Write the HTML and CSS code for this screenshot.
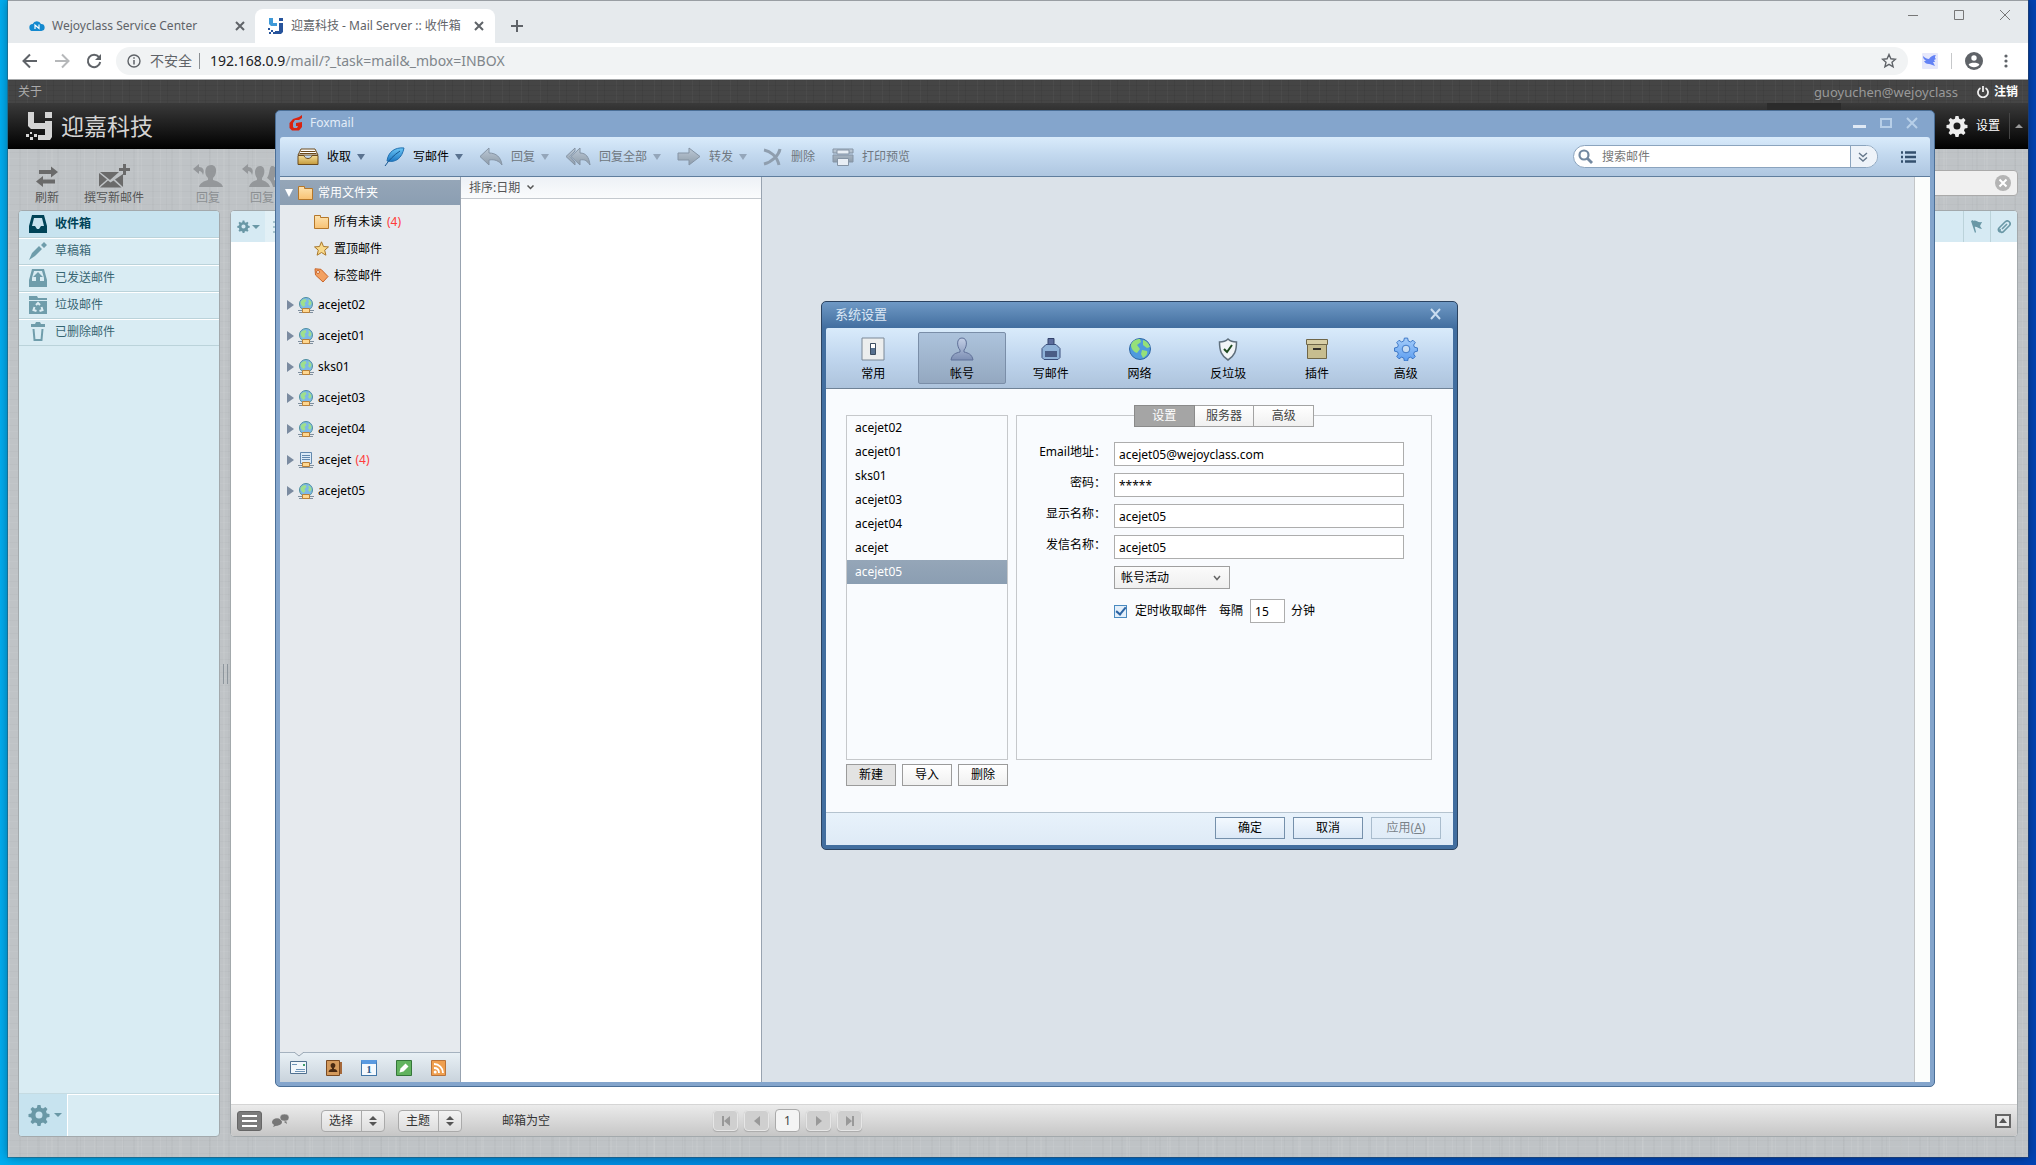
FILE: index.html
```html
<!DOCTYPE html>
<html lang="zh-CN">
  <head>
    <title>迎嘉科技 - Mail Server :: 收件箱</title>
    <meta charset="utf-8" />
    <link rel="stylesheet" href="styles.css">
  </head>
  <body>
    <svg class="sprite" aria-hidden="true">
      <defs>
        <linearGradient id="g-gold" x1="0" y1="0" x2="0" y2="1"><stop offset="0" stop-color="#f3dc97"/><stop offset="1" stop-color="#c49a3c"/></linearGradient>
        <linearGradient id="g-folder" x1="0" y1="0" x2="0" y2="1"><stop offset="0" stop-color="#fde3b0"/><stop offset="1" stop-color="#f8c172"/></linearGradient>
        <linearGradient id="g-grey" x1="0" y1="0" x2="0" y2="1"><stop offset="0" stop-color="#bcc9d6"/><stop offset="1" stop-color="#8e9caa"/></linearGradient>
        <linearGradient id="g-blue" x1="0" y1="0" x2="0" y2="1"><stop offset="0" stop-color="#6cc6f5"/><stop offset="1" stop-color="#1d78c4"/></linearGradient>
        <linearGradient id="g-slate" x1="0" y1="0" x2="0" y2="1"><stop offset="0" stop-color="#c3cfe6"/><stop offset="1" stop-color="#7d8fb4"/></linearGradient>
        <linearGradient id="g-gear" x1="0" y1="0" x2="0" y2="1"><stop offset="0" stop-color="#a5cdfa"/><stop offset="1" stop-color="#5c9df0"/></linearGradient>
        <path id="gear-shape" fill-rule="evenodd" d="M9.500 1h3l.6 2.700 2 .8 2.300-1.500 2.100 2.100-1.500 2.300.8 2 2.700.6v3l-2.700.6-.8 2 1.500 2.300-2.100 2.100-2.300-1.500-2 .8-.6 2.700h-3l-.6-2.700-2-.8-2.300 1.500-2.100-2.100 1.500-2.300-.8-2-2.700-.6v-3l2.700-.6.8-2-1.500-2.300 2.100-2.100 2.300 1.500 2-.8zM11 7.500a3.500 3.500 0 1 0 0 7 3.500 3.500 0 0 0 0-7z"/>
        <g id="net-globe">
          <circle cx="8" cy="7" r="6.500" fill="#7db8e8" stroke="#4d8f9e"/>
          <path d="M2.500 5c1-2 3-3 5-3l1 2-2 2 1 2-2 2C4 9 2.500 7 2.500 5zM10 2.500c2 .5 3.500 2 3.500 4L12 9l-2-2 1-2z" fill="#9fe08c"/>
          <path d="M0 13.500h16M1 15.500h14" stroke="#7f8f9e"/>
          <path d="M4.500 11.500h7v4h-7z" fill="#ffd78f" stroke="#b9813a"/>
        </g>
      </defs>
    </svg>

    <div class="desktop">
      <div class="browser">
        <div class="tabs">
          <div class="tab">
            <svg width="16" height="16" viewBox="0 0 16 16"><path d="M4 13a3.500 3.500 0 0 1-.3-7A4.500 4.500 0 0 1 12 6a3.500 3.500 0 0 1 .3 7z" fill="#1389cf"/><path d="M6 11V7l4 3.500V6.500" fill="none" stroke="#fff" stroke-width="1.200"/></svg>
            <span class="tab-title">Wejoyclass Service Center</span>
            <button class="tab-close" aria-label="关闭"><svg width="10" height="10" viewBox="0 0 10 10"><path d="M1 1l8 8M9 1L1 9"/></svg></button>
          </div>
          <div class="tab active">
            <svg width="16" height="16" viewBox="0 0 16 16"><path d="M1 0h4v5h4v3H3L1 6z" fill="#3f9ad8"/><path d="M11 0h4v3h-4zM11 5h4v9l-2 2H7v-3h4z" fill="#27549c"/><path d="M0 10h2v2H0zM3 12h2v2H3zM1 14h2v2H1zM5 14h2v2H5z" fill="#27549c"/></svg>
            <span class="tab-title">迎嘉科技 - Mail Server :: 收件箱</span>
            <button class="tab-close" aria-label="关闭"><svg width="10" height="10" viewBox="0 0 10 10"><path d="M1 1l8 8M9 1L1 9"/></svg></button>
          </div>
          <button class="tab-new" aria-label="新标签页"><svg width="12" height="12" viewBox="0 0 12 12"><path d="M6 0v12M0 6h12"/></svg></button>
          <div class="browser-controls">
            <button aria-label="最小化"><svg width="10" height="10" viewBox="0 0 10 10"><path d="M0 5.500h10"/></svg></button>
            <button aria-label="最大化"><svg width="10" height="10" viewBox="0 0 10 10"><path d="M.5.5h9v9h-9z"/></svg></button>
            <button aria-label="关闭窗口"><svg width="10" height="10" viewBox="0 0 10 10"><path d="M0 0l10 10M10 0L0 10"/></svg></button>
          </div>
        </div>

        <div class="navbar">
          <button class="nav" aria-label="后退"><svg width="16" height="16" viewBox="0 0 16 16"><path d="M15 8H2M8 1.500L1.500 8 8 14.500"/></svg></button>
          <button class="nav dim" aria-label="前进"><svg width="16" height="16" viewBox="0 0 16 16"><path d="M1 8h13M8 1.500L14.500 8 8 14.500"/></svg></button>
          <button class="nav" aria-label="刷新页面"><svg width="16" height="16" viewBox="0 0 16 16"><path d="M13 4.200A6.200 6.200 0 1 0 14.200 9"/><path d="M15 1v6H9z" fill="#5f6368" stroke="none"/></svg></button>
          <div class="omnibox">
            <svg width="14" height="14" viewBox="0 0 14 14"><circle cx="7" cy="7" r="6" fill="none" stroke="#5f6368" stroke-width="1.400"/><path d="M7 6v4.500M7 3.300v1.500" stroke="#5f6368" stroke-width="1.500"/></svg>
            <span class="insecure">不安全</span>
            <span class="url"><b>192.168.0.9</b>/mail/?_task=mail&amp;_mbox=INBOX</span>
            <svg class="star" width="16" height="16" viewBox="0 0 16 16"><path d="M8 1.500l1.900 4.300 4.600.4-3.500 3.100 1.100 4.600L8 11.400l-4.100 2.500L5 9.300 1.500 6.200l4.600-.4z" fill="none" stroke="#5f6368" stroke-width="1.400"/></svg>
          </div>
          <svg class="bird" width="16" height="16" viewBox="0 0 16 16"><rect width="16" height="16" rx="1" fill="#e6e8fb"/><path d="M1 3c2 2 4 3 6 3 1-2 4-4 7-4-1 1-1 2-1 3l1 1-2 1 1 2h-2l2 4c-3-1-4-2-6-2-3 0-4-1-5-3 1 0 1 0 2-.5C2 7 1 5 1 3z" fill="#6382f5"/></svg>
          <span class="nav-rule"></span>
          <svg class="avatar" width="18" height="18" viewBox="0 0 18 18"><circle cx="9" cy="9" r="9" fill="#5f6368"/><circle cx="9" cy="6" r="2.700" fill="#fff"/><path d="M3.600 12.500c1-2.500 9.800-2.500 10.800 0-2 3.500-8.800 3.500-10.800 0z" fill="#fff"/></svg>
          <svg width="4" height="14" viewBox="0 0 4 14" fill="#5f6368"><circle cx="2" cy="2" r="1.600"/><circle cx="2" cy="7" r="1.600"/><circle cx="2" cy="12" r="1.600"/></svg>
        </div>

        <div class="webmail">
          <div class="topline">
            <a href="#about">关于</a>
            <span class="username">guoyuchen@wejoyclass</span>
            <a class="logout" href="#logout"><svg width="12" height="12" viewBox="0 0 12 12"><path d="M3.500 2a5 5 0 1 0 5 0M6 0v6" fill="none" stroke="#eee" stroke-width="1.800"/></svg>注销</a>
          </div>
          <div class="masthead">
            <svg width="27" height="28" viewBox="0 0 27 28" fill="#d4d4d4"><path d="M2 0h6v11h11V9h7v16l-2 3H12v-5h7v-6H5l-3-3zM19 0h7v6h-7z"/><path d="M0 22h3v3H0zM4 25h3v3H4zM8 22h3v3H8zM4 20h2v2H4z"/></svg>
            <span class="brand">迎嘉科技</span>
            <span class="task-tab"></span>
            <a class="settings" href="#settings"><svg width="22" height="22" viewBox="0 0 22 22" fill="#eee"><use href="#gear-shape"/></svg>设置</a>
            <button class="task-more" aria-label="更多"><svg width="8" height="4" viewBox="0 0 8 4"><path d="M4 0l4 4H0z" fill="#999"/></svg></button>
          </div>
          <div class="mail-toolbar">
            <button class="tool refresh"><svg width="24" height="24" viewBox="0 0 24 24"><path d="M4 6h12V2.500L23 8l-7 5.500V10H4zM20 15.500H8V12l-7 5.500L8 23v-3.500h12z"/></svg>刷新</button>
            <button class="tool compose"><svg width="31" height="24" viewBox="0 0 31 24"><path d="M0 9l8 6.500L0 22.500zM1 8h19l-9 8zM24 10v13l-8-7.500zM1 23.500l8-7 2.500 2 3-2 8 7z"/><path d="M24 0h3v4h4v3h-4v4h-3V7h-4V4h4z"/></svg>撰写新邮件</button>
            <button class="tool reply" disabled><svg width="30" height="24" viewBox="0 0 30 24"><path d="M0 5l6-5v3c4 0 6 3 4 8-1-3-2-4-4-4v3z"/><path d="M18 1c7 0 6 10 2 13v2c4 1 9 3 10 7H6c1-4 5-6 9-7v-2C11 11 11 1 18 1z"/></svg>回复</button>
            <button class="tool reply-all" disabled><svg width="40" height="24" viewBox="0 0 40 24"><path d="M0 5l6-5v3c4 0 6 3 4 8-1-3-2-4-4-4v3z"/><path d="M18 2c6 0 5 9 2 12v2c3 1 7 3 8 7H7c1-4 4-6 8-7v-2c-3-3-3-12 3-12zM30 2c6 0 5 9 2 12v2c3 1 7 3 8 7h-9c-1-5-4-8-6-9 3-4 2-12 5-12z"/></svg>回复</button>
            <div class="quicksearch"><input type="text" aria-label="搜索"><button aria-label="清除"><svg width="16" height="16" viewBox="0 0 16 16"><circle cx="8" cy="8" r="8" fill="#b4b4b4"/><path d="M4.500 4.500l7 7M11.500 4.500l-7 7" stroke="#fff" stroke-width="2"/></svg></button></div>
          </div>
          <div class="panes">
            <div class="folders">
              <ul>
                <li class="selected"><a href="#inbox"><svg width="20" height="18" viewBox="0 0 20 18"><path fill-rule="evenodd" d="M4 0h12l3 11v7H1v-7zM6 3L4 11h3l2 3h2l2-3h3l-2-8z"/></svg>收件箱</a></li>
                <li><a href="#drafts"><svg width="20" height="18" viewBox="0 0 20 18"><path d="M1 18l3-7 7-7 3 3-7 7zM13 3l3-3 3 3-3 3z"/></svg>草稿箱</a></li>
                <li><a href="#sent"><svg width="20" height="18" viewBox="0 0 20 18"><path fill-rule="evenodd" d="M4 0h12l3 11v7H1v-7zM6 2L4 9v3h12V9l-2-7z"/><path d="M10 3l5 5h-3v5H8V8H5z"/></svg>已发送邮件</a></li>
                <li><a href="#junk"><svg width="20" height="18" viewBox="0 0 20 18"><path d="M1 0h8l1 2h9v2H1z"/><path d="M1 5h18v13H1z"/><path d="M8 9l2-2 2 2M13.500 11l1 3-3 1M8.500 15l-3-1 1-3" fill="none" stroke="#dcedf3" stroke-width="2"/></svg>垃圾邮件</a></li>
                <li><a href="#trash"><svg width="20" height="20" viewBox="0 0 20 20"><path d="M3 2h4l1-2h4l1 2h4v3H3z"/><path d="M5.500 7l1 11h7l1-11" fill="none" stroke="#6f9dab" stroke-width="2"/></svg>已删除邮件</a></li>
              </ul>
              <div class="folders-footer">
                <button aria-label="文件夹操作"><svg width="22" height="22" viewBox="0 0 22 22" fill="#6a98a6"><use href="#gear-shape"/></svg><i class="caret"></i></button>
              </div>
            </div>
            <div class="splitter"></div>
            <div class="messages">
              <div class="list-head">
                <button class="list-options" aria-label="列表选项"><svg width="13" height="13" viewBox="0 0 22 22" fill="#6a98a6"><use href="#gear-shape"/></svg><i class="caret"></i></button>
                <span class="subject"><svg width="12" height="12" viewBox="0 0 12 12"><path d="M1 1h10M1 6h10M1 11h10" stroke="#6a98a6"/></svg></span>
                <span class="flag"><svg width="12" height="13" viewBox="0 0 12 13" fill="#6a98a6"><path d="M0 1l2-1 3 12-1 1zM2 1c3-2 4 2 9 1L9 6l2 3C7 9 6 6 3 7z"/></svg></span>
                <span class="attach"><svg width="14" height="14" viewBox="0 0 14 14" fill="none" stroke="#6a98a6" stroke-width="1.600"><path d="M5 9l5-5M3 12c-2-1-2-3-1-4l6-6c3-3 7 1 4 4l-6 6c-2 1-4-1-2.500-3"/></svg></span>
              </div>
              <div class="list-body"></div>
              <div class="list-foot">
                <button class="mode on" aria-label="列表"><svg width="15" height="12" viewBox="0 0 15 12"><path d="M0 1h15M0 6h15M0 11h15" stroke="#fff" stroke-width="2"/></svg></button>
                <button class="mode" aria-label="会话"><svg width="17" height="13" viewBox="0 0 17 13" fill="#777"><ellipse cx="5" cy="8" rx="5" ry="3.700"/><path d="M1 13l2-4 3 2zM15 10l-1-4-2 2z"/><ellipse cx="12.500" cy="3.600" rx="4.500" ry="3.500" stroke="#d8d8d8" stroke-width=".6"/></svg></button>
                <button class="picker">选择<span><i class="up"></i><i class="down"></i></span></button>
                <button class="picker">主题<span><i class="up"></i><i class="down"></i></span></button>
                <span class="count">邮箱为空</span>
                <div class="pager">
                  <button aria-label="首页" disabled><svg width="10" height="10" viewBox="0 0 10 10"><path d="M1 0h2v10H1zM9 0v10L3 5z"/></svg></button>
                  <button aria-label="上一页" disabled><svg width="10" height="10" viewBox="0 0 10 10"><path d="M8 0v10L2 5z"/></svg></button>
                  <input type="text" value="1" aria-label="页码">
                  <button aria-label="下一页" disabled><svg width="10" height="10" viewBox="0 0 10 10"><path d="M2 0v10l6-5z"/></svg></button>
                  <button aria-label="末页" disabled><svg width="10" height="10" viewBox="0 0 10 10"><path d="M7 0h2v10H7zM1 0v10l6-5z"/></svg></button>
                </div>
                <button class="preview-toggle" aria-label="预览"><svg width="16" height="14" viewBox="0 0 16 14"><path d="M1 1h14v12H1z" fill="#e8e8e8" stroke="#666" stroke-width="2"/><path d="M8 4l4 5H4z" fill="#555"/></svg></button>
              </div>
            </div>
          </div>
        </div>
      </div>

      <div class="foxmail">
        <div class="fox-title">
          <svg width="14" height="16" viewBox="0 0 14 16"><path d="M4 4l6-2 3-2v3L10 5H6L4 8v4l1 1h3l1-2H7V8l6-1v5l-3 3.500H3L.5 13V8z" fill="#d9230f"/></svg>
          <span>Foxmail</span>
          <div class="fox-controls">
            <button aria-label="最小化"><svg width="13" height="10" viewBox="0 0 13 10"><path d="M0 7h13v3H0z" fill="#dfe9f5"/></svg></button>
            <button aria-label="最大化"><svg width="12" height="10" viewBox="0 0 12 10"><path d="M1 1h10v8H1z" fill="none" stroke="#b7cfe8" stroke-width="2"/></svg></button>
            <button aria-label="关闭"><svg width="12" height="12" viewBox="0 0 12 12"><path d="M1 1l10 10M11 1L1 11" stroke="#b7cfe8" stroke-width="2"/></svg></button>
          </div>
        </div>
        <div class="fox-toolbar">
          <button><svg width="22" height="18" viewBox="0 0 22 18"><path d="M4 1h14l3 6H1z" fill="#fff" stroke="#6b4a1c"/><path d="M3.500 3.500h15M2.500 5.500h17" stroke="#6b4a1c"/><path d="M1 7.500h6c1 4 7 4 8 0h6v9H1z" fill="url(#g-gold)" stroke="#6b4a1c"/></svg>收取<i class="caret"></i></button>
          <button><svg width="24" height="20" viewBox="0 0 24 20"><path d="M23 1C14 0 7 5 6 14c9 2 15-3 17-13z" fill="url(#g-blue)" stroke="#2471b0"/><path d="M4 19C8 13 13 8 19 4" fill="none" stroke="#16568f"/></svg>写邮件<i class="caret"></i></button>
          <button disabled><svg width="24" height="20" viewBox="0 0 24 20"><path d="M10 1v5c7 0 12 4 13 12-3-4-7-6-13-5v5L1 9.500z" fill="url(#g-grey)" stroke="#8594a5"/></svg>回复<i class="caret"></i></button>
          <button disabled><svg width="26" height="20" viewBox="0 0 26 20"><path d="M10 1v3L5 9.500 10 15v3L1 9.500z" fill="url(#g-grey)" stroke="#8594a5"/><path d="M15 1v5c6 0 9 4 10 12-3-4-5-6-10-5v5L6 9.500z" fill="url(#g-grey)" stroke="#8594a5"/></svg>回复全部<i class="caret"></i></button>
          <button disabled><svg width="24" height="20" viewBox="0 0 24 20"><path d="M1 6h11V1l11 8.500L12 18v-5H1z" fill="url(#g-grey)" stroke="#8594a5"/></svg>转发<i class="caret"></i></button>
          <button disabled><svg width="20" height="18" viewBox="0 0 20 18"><path d="M1 2c6 1 13 6 15 15M17 1c-1 6-8 13-16 15" fill="none" stroke="#8f9eae" stroke-width="3"/></svg>删除</button>
          <button disabled><svg width="22" height="18" viewBox="0 0 22 18"><path d="M1 1h20v4H1zM1 7h20v7H1z" fill="url(#g-grey)" stroke="#8594a5"/><path d="M5 2h12v4H5zM5.500 10.500h11v7h-11z" fill="#e8eef5" stroke="#8594a5"/></svg>打印预览</button>
          <div class="fox-search">
            <svg width="15" height="15" viewBox="0 0 15 15"><circle cx="6" cy="6" r="4.500" fill="none" stroke="#7288a0" stroke-width="2.200"/><path d="M9.500 9.500L14 14" stroke="#7288a0" stroke-width="2.800"/></svg>
            <input type="text" placeholder="搜索邮件" aria-label="搜索邮件">
            <button aria-label="高级搜索"><svg width="10" height="10" viewBox="0 0 10 10"><path d="M1 1l4 3.500L9 1M1 5.500L5 9l4-3.500" fill="none" stroke="#66788c" stroke-width="1.400"/></svg></button>
          </div>
          <button class="fox-menu" aria-label="菜单"><svg width="15" height="12" viewBox="0 0 15 12"><path d="M0 1.500h2M4 1.500h11M0 6h2M4 6h11M0 10.500h2M4 10.500h11" stroke="#34506e" stroke-width="2.600"/></svg></button>
        </div>
        <div class="fox-body">
          <div class="fox-side">
            <div class="group"><i class="open"></i><svg width="15" height="14" viewBox="0 0 15 14"><path d="M.5.5h6v2h8v11H.5z" fill="url(#g-folder)" stroke="#b5772a"/></svg>常用文件夹</div>
            <ul class="common">
              <li><svg width="15" height="14" viewBox="0 0 15 14"><path d="M.5.5h6v2h8v11H.5z" fill="url(#g-folder)" stroke="#b5772a"/></svg>所有未读 <em>(4)</em></li>
              <li><svg width="15" height="15" viewBox="0 0 15 15"><path d="M7.500.8l2 4.700 5 .4-3.800 3.300 1.200 5-4.400-2.700-4.400 2.700 1.200-5L.5 5.900l5-.4z" fill="#f8d98a" stroke="#a8772c"/></svg>置顶邮件</li>
              <li><svg width="15" height="15" viewBox="0 0 15 15"><path d="M1 .8l6 .5L14 8.500 9 14 1.500 7z" fill="#f3a161" stroke="#c9662b"/><circle cx="4" cy="4" r="1.500" fill="#fff" stroke="#c9662b"/></svg>标签邮件</li>
            </ul>
            <ul class="accounts">
              <li><i class="closed"></i><svg width="16" height="16" viewBox="0 0 16 16"><use href="#net-globe"/></svg>acejet02</li>
              <li><i class="closed"></i><svg width="16" height="16" viewBox="0 0 16 16"><use href="#net-globe"/></svg>acejet01</li>
              <li><i class="closed"></i><svg width="16" height="16" viewBox="0 0 16 16"><use href="#net-globe"/></svg>sks01</li>
              <li><i class="closed"></i><svg width="16" height="16" viewBox="0 0 16 16"><use href="#net-globe"/></svg>acejet03</li>
              <li><i class="closed"></i><svg width="16" height="16" viewBox="0 0 16 16"><use href="#net-globe"/></svg>acejet04</li>
              <li><i class="closed"></i><svg width="16" height="16" viewBox="0 0 16 16"><path d="M2.500.5h11v11h-11z" fill="#dcebf8" stroke="#6288ad"/><path d="M4 3.500h8M4 5.500h8M4 7.500h8" stroke="#6288ad"/><path d="M0 13.500h16M1 15.500h14" stroke="#7f8f9e"/><path d="M4.500 10.500h7v4h-7z" fill="#ffd78f" stroke="#b9813a"/></svg>acejet <em>(4)</em></li>
              <li><i class="closed"></i><svg width="16" height="16" viewBox="0 0 16 16"><use href="#net-globe"/></svg>acejet05</li>
            </ul>
            <div class="modules">
              <svg class="notch" width="10" height="5" viewBox="0 0 10 5"><path d="M0 0l5 4 5-4" fill="#e6eaee" stroke="#98a6b3"/></svg>
              <button aria-label="邮件"><svg width="17" height="16" viewBox="0 0 17 16"><path d="M.5 1.500h16v12H.5z" fill="#f2f7fb" stroke="#50708f"/><path d="M2 4.500h5M6 9.500h9M5 11.500h10" stroke="#6f95b8"/><path d="M13 4h2v2h-2z" fill="#3f9f6a"/></svg></button>
              <button aria-label="联系人"><svg width="16" height="16" viewBox="0 0 16 16"><path d="M.5.500h13v15H.5z" fill="#d49a5c" stroke="#7a4a22"/><path d="M14 2h2v12h-2z" fill="#a5683a"/><path d="M7 3c3 0 3 4 1 5v1c2 0 3 1 3.500 3h-9C3 10 4 9 6 9V8C4 7 4 3 7 3z" fill="#4a2a12"/></svg></button>
              <button class="calendar" aria-label="日历"><b>1</b></button>
              <button aria-label="便签"><svg width="16" height="16" viewBox="0 0 16 16"><path d="M.5.500h15v15H.5z" fill="#62b35f" stroke="#34763a"/><path d="M3.500 12.500l1-4 5-5 3 3-5 5z" fill="#fff"/></svg></button>
              <button aria-label="订阅"><svg width="15" height="16" viewBox="0 0 15 16"><path d="M.5.500h14v15H.5z" fill="#ef9f4f" stroke="#b9733a"/><path d="M3 4c5 0 9 4 9 9M3 8c3 0 5 2 5 5" fill="none" stroke="#fff" stroke-width="1.800"/><circle cx="4.200" cy="12" r="1.500" fill="#fff"/></svg></button>
            </div>
          </div>
          <div class="fox-list">
            <div class="sort">排序:日期 <svg width="7" height="5" viewBox="0 0 7 5"><path d="M.5.500l3 3 3-3" fill="none" stroke="#555" stroke-width="1.500"/></svg></div>
          </div>
          <div class="fox-preview"></div>
          <div class="fox-strip"></div>
        </div>
      </div>

      <form class="dialog">
        <div class="dialog-title">系统设置<button type="button" aria-label="关闭"><svg width="11" height="12" viewBox="0 0 11 12"><path d="M1 1l9 10M10 1L1 11" stroke="#c9dcf0" stroke-width="2"/></svg></button></div>
        <div class="sections">
          <button type="button"><svg width="24" height="24" viewBox="0 0 24 24"><path d="M1 1h22v22H1z" fill="#eceeee" stroke="#7b8896"/><path d="M9.500 6.500h5v11h-5z" fill="#56708f" stroke="#3b4c60"/><path d="M10 7h4v4h-4z" fill="#fff"/></svg>常用</button>
          <button type="button" class="current"><svg width="24" height="24" viewBox="0 0 24 24"><path d="M12 1c6 0 5 9 2 12v2c4 1 8 2 9 8H1c1-6 5-7 9-8v-2C7 10 6 1 12 1z" fill="url(#g-slate)" stroke="#5f7098"/></svg>帐号</button>
          <button type="button"><svg width="24" height="24" viewBox="0 0 24 24"><path d="M9 1.500h6v6H9z" fill="#5c6c9c" stroke="#33436b"/><path d="M7 7.500h10l4 4v9l-2 2H5l-2-2v-9z" fill="#8fb2d8" stroke="#3a4f7c"/><path d="M6 14h12v6H6z" fill="#4a5d86"/></svg>写邮件</button>
          <button type="button"><svg width="24" height="24" viewBox="0 0 24 24"><circle cx="12" cy="12" r="10.500" fill="#4e9ade" stroke="#2f68a5"/><path d="M3 8c1-4 5-6 9-6l1 3-4 3 3 4-3 4c-3-1-6-4-6-8zM15 3c4 1 6 4 7 7l-3 1-4-3zM14 13l5 1c1 3-1 5-4 7l-2-4z" fill="#95e079"/></svg>网络</button>
          <button type="button"><svg width="24" height="24" viewBox="0 0 24 24"><path d="M12 2c2 2 5 3 8.500 3 0 9-2 14-8.500 18C5.500 19 3.500 14 3.500 5 7 5 10 4 12 2z" fill="#f2f5f7" stroke="#5f6f7c" stroke-width="1.500"/><path d="M8 12l3 3 5-7" fill="none" stroke="#1f4a1f" stroke-width="2"/></svg>反垃圾</button>
          <button type="button"><svg width="24" height="24" viewBox="0 0 24 24"><path d="M1.500 2.500h21v5h-21z" fill="#d8cfa6" stroke="#6f6648"/><path d="M2.500 7.500h19v14h-19z" fill="#c7bd8f" stroke="#6f6648"/><path d="M8 12h8" stroke="#33302a" stroke-width="2"/></svg>插件</button>
          <button type="button"><svg width="24" height="24" viewBox="0 0 22 22" fill="url(#g-gear)" stroke="#2f6cc0" stroke-width=".8"><use href="#gear-shape"/></svg>高级</button>
        </div>
        <div class="dialog-body">
          <div class="account-list">
            <ul>
              <li>acejet02</li>
              <li>acejet01</li>
              <li>sks01</li>
              <li>acejet03</li>
              <li>acejet04</li>
              <li>acejet</li>
              <li class="selected">acejet05</li>
            </ul>
            <div class="account-actions">
              <button type="button" class="pressed">新建</button>
              <button type="button">导入</button>
              <button type="button">删除</button>
            </div>
          </div>
          <div class="account-form">
            <div class="form-tabs">
              <button type="button" class="current">设置</button>
              <button type="button">服务器</button>
              <button type="button">高级</button>
            </div>
            <div class="fields">
              <label for="email">Email地址：</label>
              <input id="email" type="text" value="acejet05@wejoyclass.com">
              <label for="pass">密码：</label>
              <input id="pass" type="text" value="*****">
              <label for="shown">显示名称：</label>
              <input id="shown" type="text" value="acejet05">
              <label for="sender">发信名称：</label>
              <input id="sender" type="text" value="acejet05">
              <div class="status">
                <select aria-label="帐号状态"><option>帐号活动</option></select>
                <svg width="8" height="6" viewBox="0 0 8 6"><path d="M1 1l3 3.500L7 1" fill="none" stroke="#666" stroke-width="1.500"/></svg>
              </div>
              <div class="timer">
                <input id="auto" type="checkbox" checked>
                <label for="auto">定时收取邮件</label>
                <label for="every">每隔</label>
                <input id="every" type="text" value="15">
                <span>分钟</span>
              </div>
            </div>
          </div>
        </div>
        <div class="dialog-footer">
          <button type="button">确定</button>
          <button type="button">取消</button>
          <button type="button" disabled>应用(<u>A</u>)</button>
        </div>
      </form>
    </div>
  </body>
</html>
```
FILE: styles.css
```css
* {
  box-sizing: border-box;
}
body {
  margin: 0;
  font-family: "Noto Sans", "Noto Sans CJK SC", sans-serif;
  font-size: 12px;
  line-height: 16px;
  color: #000;
}
ul {
  list-style: none;
  margin: 0;
  padding: 0;
}
button, input, select {
  font: inherit;
  color: inherit;
  margin: 0;
}
button {
  border: 0;
  padding: 0;
  background: none;
}
a {
  color: inherit;
  text-decoration: none;
}
svg {
  display: block;
  flex: none;
}
em {
  font-style: normal;
  color: #ff3b3b;
}
.sprite {
  position: absolute;
  width: 0;
  height: 0;
}
.caret {
  border: 4px solid transparent;
  border-top: 4px solid currentColor;
  border-bottom: 0;
}

.desktop {
  position: relative;
  display: flex;
  min-height: 100vh;
  padding: 0 8px 8px;
  background: linear-gradient(90deg, #00adf0, #0078d8 50%, #0043b4 85%);
}

/* browser */
.browser {
  flex: 1;
  display: flex;
  flex-direction: column;
  min-width: 0;
  border-top: 1px solid #999ea3;
  box-shadow: 0 0 0 1px rgba(60, 70, 80, 0.4), 0 0 10px rgba(0, 0, 0, 0.4);
}
.tabs {
  display: flex;
  align-items: flex-end;
  height: 42px;
  background: #e6eaed;
  color: #5f6368;
}
.tab {
  display: flex;
  align-items: center;
  width: 247px;
  height: 34px;
  padding: 0 10px 0 21px;
}
.tab.active {
  width: 240px;
  padding: 0 11px 0 13px;
  border-radius: 8px 8px 0 0;
  background: #fff;
}
.tab-title {
  flex: 1;
  margin-left: 7px;
  white-space: nowrap;
}
.tab-close svg, .tab-new svg, .browser-controls svg {
  fill: none;
  stroke: #5f6368;
  stroke-width: 2;
}
.tab-new {
  padding: 11px 16px;
}
.browser-controls {
  display: flex;
  align-self: flex-start;
  gap: 36px;
  margin-left: auto;
  padding: 9px 18px 0 0;
}
.browser-controls svg {
  stroke: #777;
  stroke-width: 1;
}
.navbar {
  display: flex;
  align-items: center;
  height: 37px;
  padding: 0 20px 0 14px;
  border-bottom: 1px solid #a6a8aa;
  background: #fff;
}
.nav {
  margin-right: 16px;
}
.nav svg {
  fill: none;
  stroke: #5f6368;
  stroke-width: 2;
}
.nav.dim {
  opacity: 0.45;
}
.omnibox {
  flex: 1;
  display: flex;
  align-items: center;
  height: 28px;
  margin-left: -2px;
  padding: 0 11px;
  border-radius: 14px;
  background: #f1f3f4;
  font-size: 14px;
  color: #5f6368;
}
.insecure {
  margin: 0 7px 0 9px;
}
.url {
  flex: 1;
  padding-left: 10px;
  border-left: 1px solid #8b8f93;
  color: #80868b;
}
.url b {
  font-weight: normal;
  color: #202124;
}
.bird {
  margin-left: 14px;
}
.nav-rule {
  width: 1px;
  height: 16px;
  margin: 0 13px;
  background: #c6c8ca;
}
.avatar {
  margin-right: 21px;
}

/* webmail page, linen texture from a few stripe sets that never line up */
.webmail {
  flex: 1;
  display: flex;
  flex-direction: column;
  background:
    repeating-linear-gradient(90deg, rgba(255, 255, 255, 0.07) 0 1px, transparent 1px 11px, rgba(0, 0, 0, 0.02) 11px 13px, transparent 13px 19px),
    repeating-linear-gradient(90deg, rgba(255, 255, 255, 0.06) 0 2px, transparent 2px 29px, rgba(0, 0, 0, 0.02) 29px 30px, transparent 30px 43px),
    repeating-linear-gradient(rgba(255, 255, 255, 0.05) 0 1px, transparent 1px 7px, rgba(0, 0, 0, 0.02) 7px 8px, transparent 8px 13px),
    #bfc3c6;
}
.topline {
  display: flex;
  align-items: center;
  height: 23px;
  padding: 0 10px;
  background:
    repeating-linear-gradient(90deg, rgba(255, 255, 255, 0.03) 0 1px, transparent 1px 7px, rgba(0, 0, 0, 0.06) 7px 8px, transparent 8px 19px),
    repeating-linear-gradient(rgba(0, 0, 0, 0.05) 0 1px, transparent 1px 5px),
    #454545;
  color: #aaa;
}
.username {
  margin-left: auto;
  margin-right: 19px;
  font-size: 13px;
  color: #999;
}
.logout {
  display: flex;
  align-items: center;
  gap: 5px;
  font-weight: bold;
  color: #fff;
}
.masthead {
  display: flex;
  align-items: center;
  height: 46px;
  padding: 0 5px 0 18px;
  background: linear-gradient(#3a3a3a, #000);
  color: #fff;
}
.brand {
  margin-left: 8px;
  font-size: 23px;
  line-height: 28px;
  color: #d4d4d4;
}
.task-tab {
  align-self: flex-start;
  width: 74px;
  height: 7px;
  margin-left: auto;
  margin-right: 105px;
  background: #2b2b2b;
}
.settings {
  display: flex;
  align-items: center;
  gap: 8px;
}
.task-more {
  display: flex;
  align-items: center;
  height: 26px;
  margin-left: 9px;
  padding-left: 5px;
  border-left: 1px solid #444;
}
.mail-toolbar {
  display: flex;
  height: 61px;
  padding: 0 10px 0 12px;
}
.tool {
  display: flex;
  flex-direction: column;
  align-items: center;
  padding-top: 15px;
  width: 54px;
  color: #555;
}
.tool svg {
  margin-bottom: 2px;
  fill: #6a6a6a;
}
.tool.compose {
  width: 80px;
}
.tool:disabled {
  color: #8b8f92;
}
.tool:disabled svg {
  fill: #94979a;
}
.tool.reply {
  margin-left: 27px;
}
.quicksearch {
  display: flex;
  align-items: center;
  width: 240px;
  height: 26px;
  margin: 21px 0 0 auto;
  padding-right: 6px;
  border: 1px solid #aaa;
  border-radius: 4px;
  background: #f0f0f0;
}
.quicksearch input {
  flex: 1;
  min-width: 0;
  border: 0;
  background: none;
}
.panes {
  flex: 1;
  display: flex;
  padding: 0 10px 20px;
}
.folders, .messages {
  display: flex;
  flex-direction: column;
  border: 1px solid #a3a9ac;
  border-radius: 4px;
  overflow: hidden;
}
.folders {
  width: 202px;
  background: #d9ecf3;
  color: #376572;
}
.folders li {
  height: 27px;
  border-bottom: 1px solid #bbd3da;
  box-shadow: inset 0 1px #fff;
}
.folders li a {
  display: flex;
  align-items: center;
  gap: 7px;
  height: 26px;
  padding-left: 9px;
}
.folders li svg {
  fill: #6f9dab;
}
.folders li.selected {
  background: #c7e3ef;
  box-shadow: none;
  font-weight: bold;
  color: #004458;
}
.folders li.selected svg {
  fill: #004458;
}
.folders-footer {
  height: 43px;
  margin-top: auto;
  border-top: 1px solid #c5dbe2;
  box-shadow: inset 0 1px #fff;
}
.folders-footer button {
  display: flex;
  align-items: center;
  gap: 4px;
  width: 49px;
  height: 42px;
  padding-left: 9px;
  border-right: 1px solid #fff;
  background: #c7e3ef;
  color: #6a98a6;
}
.splitter {
  width: 10px;
  background: linear-gradient(90deg, #8d959c 0 1px, transparent 1px 4px, #8d959c 4px 5px, transparent 5px) 3px 50% / 6px 20px no-repeat;
}
.messages {
  flex: 1;
  background: #fff;
}
.list-head {
  display: flex;
  height: 31px;
  background: #d6eaf3;
}
.list-head > * {
  display: flex;
  align-items: center;
  justify-content: center;
  width: 27px;
  border-left: 1px solid #bbd3da;
}
.list-head .list-options {
  gap: 2px;
  width: 34px;
  border: 0;
  color: #6a98a6;
}
.list-head .subject {
  flex: 1;
  justify-content: flex-start;
  padding-left: 7px;
  border: 0;
  background: linear-gradient(90deg, #e2f0f6, #d6eaf3 20%);
}
.list-body {
  flex: 1;
}
.list-foot {
  display: flex;
  align-items: center;
  height: 32px;
  padding: 0 6px;
  border-top: 1px solid #d5d5d5;
  background: linear-gradient(#ebebeb, #c6c6c6);
}
.mode {
  margin-right: 10px;
}
.mode.on {
  padding: 3px 4px;
  border: 1px solid #666;
  border-radius: 3px;
  background: #7b7b7b;
}
.picker {
  display: flex;
  align-items: center;
  justify-content: space-between;
  width: 64px;
  height: 22px;
  margin-left: 13px;
  padding-left: 7px;
  border: 1px solid #aaa;
  border-radius: 4px;
  background: linear-gradient(#f3f3f3, #ddd);
  color: #333;
}
.mode + .picker {
  margin-left: 22px;
}
.picker span {
  display: flex;
  flex-direction: column;
  align-items: center;
  justify-content: center;
  gap: 2px;
  width: 23px;
  height: 20px;
  border-left: 1px solid #aaa;
}
.picker i {
  border: 4px solid transparent;
}
.picker .up {
  border-top: 0;
  border-bottom: 4px solid #555;
}
.picker .down {
  border-bottom: 0;
  border-top: 4px solid #555;
}
.count {
  margin-left: 40px;
  color: #333;
}
.pager {
  display: flex;
  align-items: center;
  gap: 6px;
  margin-left: 163px;
}
.pager button, .pager input {
  display: flex;
  align-items: center;
  justify-content: center;
  width: 25px;
  height: 21px;
  padding: 0;
  border: 1px solid #e6e6e6;
  border-radius: 4px;
  background: #cfcfcf;
  text-align: center;
  color: #444;
}
.pager button {
  box-shadow: 0 1px 1px #aaa;
}
.pager input {
  height: 23px;
  border-color: #aaa;
  background: #f4f4f4;
}
.pager svg {
  fill: #999;
}
.preview-toggle {
  margin-left: auto;
}

/* foxmail window */
.foxmail {
  position: absolute;
  top: 110px;
  right: 101px;
  bottom: 78px;
  left: 275px;
  display: flex;
  flex-direction: column;
  padding: 0 4px 4px;
  border: 1px solid #4b6f97;
  border-radius: 5px;
  background: #84a5cc;
}
.fox-title {
  display: flex;
  align-items: center;
  gap: 7px;
  height: 26px;
  padding: 0 12px 2px 9px;
  color: #e3edf8;
}
.fox-controls {
  display: flex;
  align-items: center;
  gap: 14px;
  margin-left: auto;
}
.fox-toolbar {
  display: flex;
  align-items: center;
  gap: 17px;
  height: 40px;
  padding: 0 14px 0 17px;
  border-bottom: 1px solid #5f7d9d;
  border-radius: 3px 3px 0 0;
  background: linear-gradient(#d9ebfb, #c3d9ef 45%, #aec6e0);
}
.fox-toolbar > button {
  display: flex;
  align-items: center;
  gap: 8px;
}
.fox-toolbar .caret {
  margin: 0 -1px 0 -2px;
  border-top-width: 6px;
  color: #5a7390;
}
.fox-toolbar button:disabled {
  color: #6f7780;
}
.fox-toolbar button:disabled .caret {
  color: #94a6ba;
}
.fox-search {
  display: flex;
  align-items: center;
  width: 305px;
  height: 23px;
  margin-left: auto;
  margin-right: 6px;
  padding-left: 4px;
  border: 1px solid #8ba4be;
  border-radius: 12px;
  background: #fff;
  overflow: hidden;
}
.fox-search input {
  flex: 1;
  min-width: 0;
  padding: 0 9px;
  border: 0;
  outline: 0;
}
.fox-search input::placeholder {
  color: #777;
}
.fox-search button {
  display: flex;
  align-items: center;
  width: 27px;
  height: 22px;
  padding-left: 7px;
  border-left: 1px solid #8ba4be;
  background: #eef3f9;
}
.fox-body {
  flex: 1;
  display: grid;
  grid-template-columns: 181px 301px 1fr 16px;
}
.fox-side {
  display: flex;
  flex-direction: column;
  padding-top: 3px;
  border-right: 1px solid #98a3b0;
  background: #e6eaee;
}
.group {
  display: flex;
  align-items: center;
  gap: 5px;
  height: 25px;
  padding-left: 5px;
  background: linear-gradient(#95a6b8, #8b9eb2);
  color: #fff;
}
.open {
  border: 4px solid transparent;
  border-top: 8px solid #fff;
  border-bottom: 0;
}
.common {
  padding-top: 3px;
}
.common li {
  display: flex;
  align-items: center;
  gap: 5px;
  height: 27px;
  padding-left: 34px;
}
.accounts li {
  display: flex;
  align-items: center;
  gap: 4px;
  height: 31px;
  padding-left: 7px;
}
.closed {
  border: 5px solid transparent;
  border-left: 7px solid #7b8ba0;
  border-right: 0;
}
.modules {
  position: relative;
  display: flex;
  align-items: center;
  gap: 19px;
  height: 30px;
  margin-top: auto;
  padding-left: 10px;
  border-top: 1px solid #a5b2bf;
  background: linear-gradient(#e8f0f5, #c9d3dc);
}
.notch {
  position: absolute;
  top: -1px;
  left: 14px;
}
.calendar {
  width: 16px;
  height: 16px;
  border: 1px solid #4377a8;
  border-top: 4px solid #5a9ae0;
  background: #f5f9fd;
  font-family: "Liberation Serif", serif;
  font-size: 11px;
  line-height: 11px;
  color: #2c5d8c;
}
.fox-list {
  border-right: 1px solid #98a3b0;
  background: #fff;
}
.sort {
  display: flex;
  align-items: center;
  gap: 7px;
  height: 22px;
  padding: 0 8px;
  border-bottom: 1px solid #c4c9ce;
  background: linear-gradient(#edf1f6, #fafbfc);
  color: #555;
}
.fox-preview {
  background: #dbe2e9;
}
.fox-strip {
  border-left: 1px solid #c3c6c8;
  background: #fbfdfc;
}

/* settings dialog */
.dialog {
  position: absolute;
  top: 301px;
  left: 821px;
  width: 637px;
  padding: 0 4px 4px;
  border: 1px solid #2b4361;
  border-radius: 5px;
  background: linear-gradient(#6f99c5, #426e9f 26px);
}
.dialog-title {
  display: flex;
  justify-content: space-between;
  align-items: center;
  height: 26px;
  padding: 0 12px 2px 9px;
  font-size: 13px;
  color: #dce8f5;
}
.sections {
  display: flex;
  height: 61px;
  padding: 4px 3px;
  border-bottom: 1px solid #6f8296;
  border-radius: 2px 2px 0 0;
  background: linear-gradient(#d9ebfb, #c0d6ee 50%, #adc3dc);
}
.sections button {
  flex: 1;
  display: flex;
  flex-direction: column;
  align-items: center;
  gap: 5px;
  padding-top: 4px;
  border: 1px solid transparent;
  border-radius: 2px;
}
.sections .current {
  border-color: #7a8ea8;
  background: linear-gradient(#adc3dc, #94a8c0);
}
.dialog-body {
  display: flex;
  gap: 8px;
  height: 423px;
  padding: 26px 21px 0 20px;
  background: #f9fbfe;
}
.account-list {
  width: 162px;
}
.account-list ul {
  height: 345px;
  border: 1px solid #c6c8cb;
}
.account-list li {
  height: 24px;
  padding-left: 8px;
  line-height: 24px;
}
.account-list .selected {
  background: linear-gradient(#95a6b8, #8b9eb2);
  color: #fff;
}
.account-actions {
  display: flex;
  gap: 6px;
  padding-top: 4px;
}
.account-actions button {
  flex: 1;
  height: 22px;
  border: 1px solid #9b9b9b;
  background: linear-gradient(#fff, #f0f0f0);
}
.account-actions .pressed {
  background: #e3e3e3;
}
.account-form {
  flex: 1;
  height: 345px;
  border: 1px solid #c6c8cb;
}
.form-tabs {
  display: flex;
  width: 180px;
  margin: -11px auto 0;
}
.form-tabs button {
  flex: 1;
  height: 22px;
  border: 1px solid #a3a3a3;
  background: linear-gradient(#fff, #f0f0f0);
  color: #444;
}
.form-tabs button + button {
  border-left: 0;
}
.form-tabs .current {
  border-color: #8a8a8a;
  background: #a5a5a5;
  color: #fff;
}
.fields {
  display: grid;
  grid-template-columns: 89px 290px;
  column-gap: 8px;
  row-gap: 7px;
  padding-top: 15px;
}
.fields > label {
  padding-top: 2px;
  text-align: right;
}
.fields input[type="text"] {
  height: 24px;
  padding: 0 4px;
  border: 1px solid #adadad;
  background: #fff;
}
.status, .timer {
  display: flex;
  align-items: center;
  grid-column: 2;
}
.status select {
  width: 116px;
  height: 23px;
  padding: 0 6px;
  border: 1px solid #9f9f9f;
  appearance: none;
  background: linear-gradient(#fbfbfb, #efefef);
}
.status svg {
  margin-left: -17px;
  pointer-events: none;
}
.timer {
  margin-top: 3px;
}
.timer input[type="checkbox"] {
  display: grid;
  place-items: center;
  width: 13px;
  height: 13px;
  margin-right: 8px;
  border: 1px solid #4a8ac0;
  appearance: none;
  background: #e4effa;
}
.timer input:checked::before {
  content: "";
  width: 4px;
  height: 8px;
  margin-top: -2px;
  border: solid #2c64a4;
  border-width: 0 2px 2px 0;
  transform: rotate(40deg);
}
.timer label {
  margin-right: 12px;
}
.timer label + input {
  width: 35px;
  margin-right: 6px;
}
.timer label[for="every"] {
  margin-right: 7px;
}
.dialog-footer {
  display: flex;
  justify-content: flex-end;
  gap: 8px;
  height: 33px;
  padding: 4px 12px 0 0;
  border-top: 1px solid #b5c3cf;
  background: linear-gradient(#e8f2fb, #deeaf6);
}
.dialog-footer button {
  width: 70px;
  height: 22px;
  border: 1px solid #7590ab;
  background: linear-gradient(#f3f9ff, #dbe8f6);
}
.dialog-footer button:disabled {
  border-color: #a9bccd;
  background: none;
  color: #7a8288;
}
```
